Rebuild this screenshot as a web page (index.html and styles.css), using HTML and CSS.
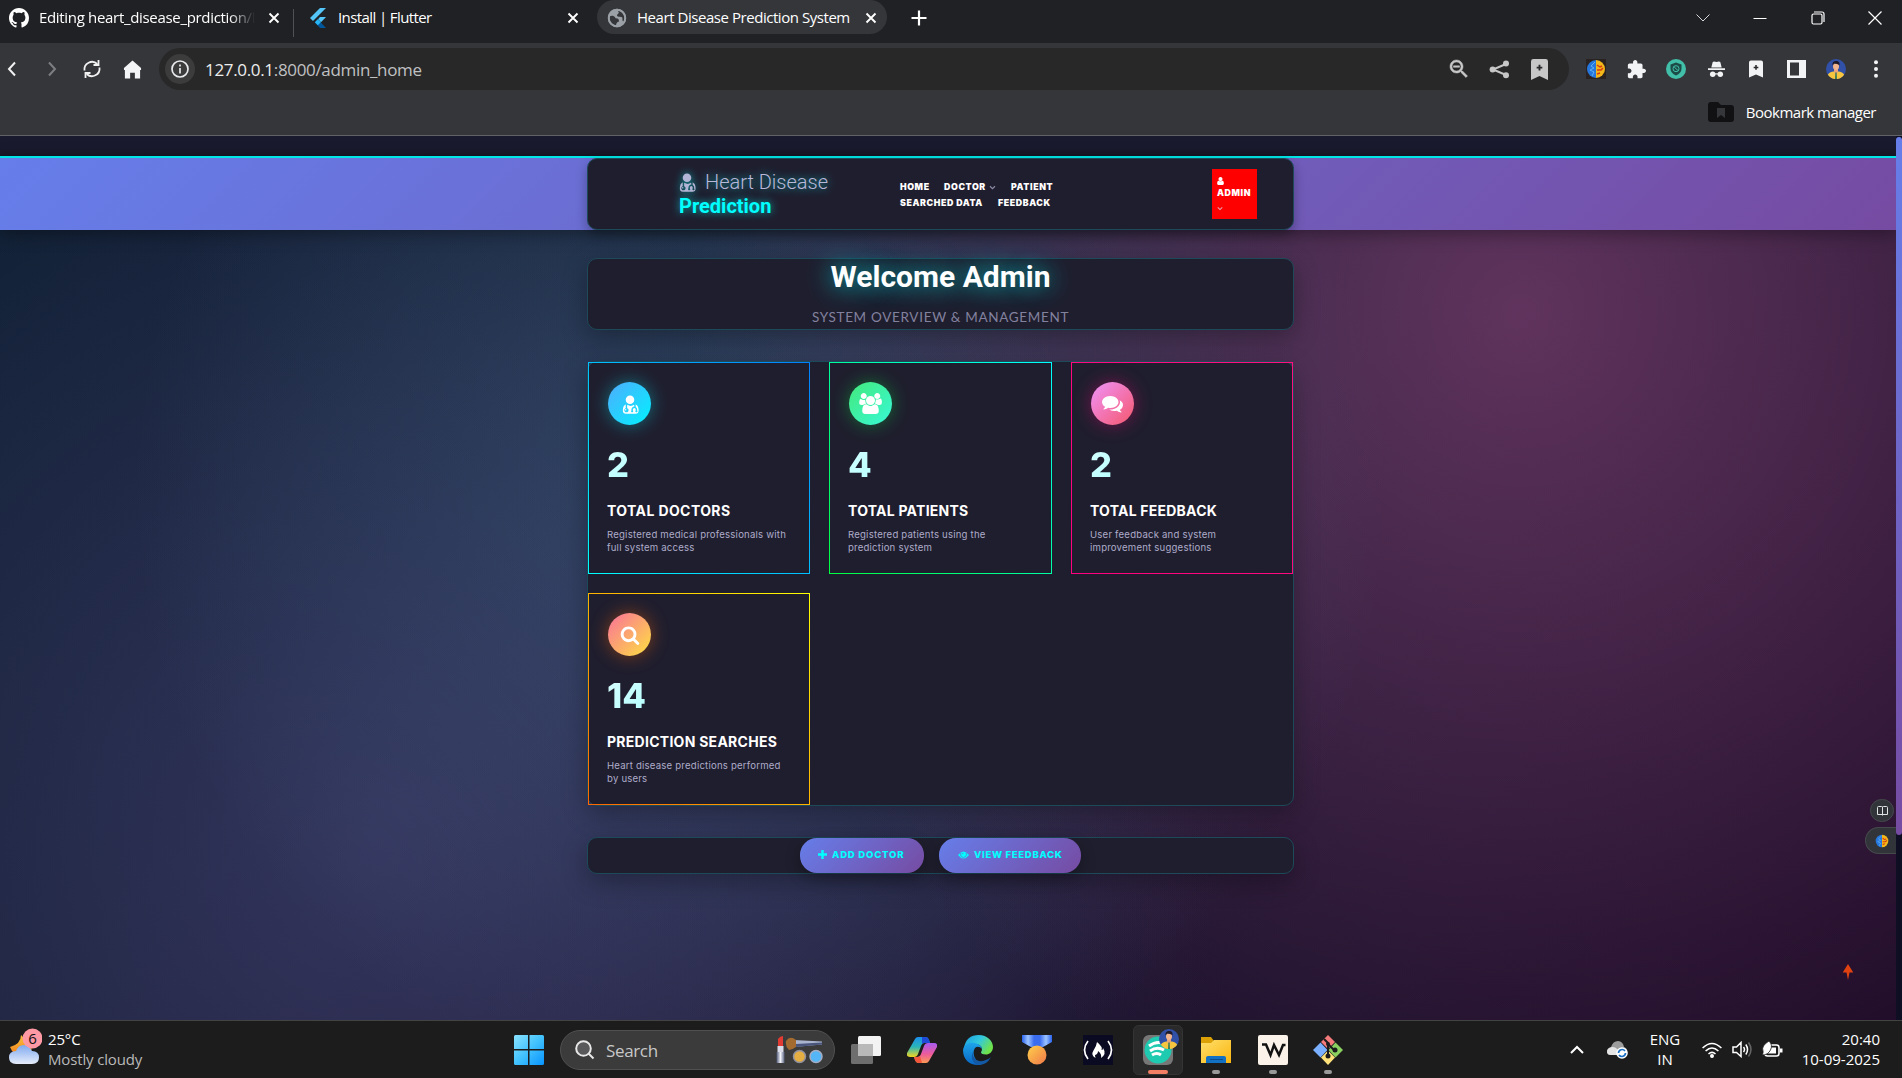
FILE: index.html
```html
<!DOCTYPE html>
<html lang="en">
<head>
<meta charset="utf-8">
<title>Heart Disease Prediction System</title>
<link rel="stylesheet" href="styles.css">
</head>
<body>
<svg width="0" height="0" class="defs">
  <defs>
    <symbol id="user-md" viewBox="0 0 1792 1792"><path d="M576 1408q0 26-19 45t-45 19-45-19-19-45 19-45 45-19 45 19 19 45zm1088 101q0 121-73 190t-194 69h-874q-121 0-194-69t-73-190q0-68 5.500-131t24-138 47.500-132.500 81-103 120-60.500q-22 52-22 120v203q-58 20-93 70t-35 111q0 80 56 136t136 56 136-56 56-136q0-61-35.500-111t-92.500-70v-203q0-62 25-93 132 104 295 104t295-104q25 31 25 93v64q-106 0-181 75t-75 181v89q-32 29-32 71 0 40 28 68t68 28 68-28 28-68q0-42-32-71v-89q0-52 38-90t90-38 90 38 38 90v89q-32 29-32 71 0 40 28 68t68 28 68-28 28-68q0-42-32-71v-89q0-68-34.500-127.500t-93.500-93.500q0-10 .5-42.500t0-48-2.500-41.500-7-47-13-40q68 15 120 60.500t81 103 47.500 132.500 24 138 5.500 131zm-384-997q0 159-112.500 271.500t-271.500 112.500-271.500-112.500-112.500-271.500 112.500-271.500 271.500-112.500 271.500 112.500 112.500 271.500z"/></symbol>
    <symbol id="close" viewBox="0 0 12 12"><path d="M1.500 1.500l9 9M10.500 1.500l-9 9" stroke="currentColor" stroke-width="1.900" fill="none"/></symbol>
    <symbol id="caret" viewBox="0 0 8 6"><path d="M1 1.500l3 3 3-3" stroke="currentColor" stroke-width="1.400" fill="none"/></symbol>
    <symbol id="brain" viewBox="0 0 20 20"><path d="M10 1a9 9 0 0 0 0 18z" fill="#2677dc"/><path d="M10 1a9 9 0 0 1 0 18z" fill="#f4b719"/><path d="M9 3L5 7l3 2-4 2 4 2-2 4" stroke="#5fb0f5" fill="none" stroke-width="1"/><path d="M11 6l3 2 2-1M11 11l4 0 2-2M11 15l3-1" stroke="#d63c12" fill="none" stroke-width="1.500"/></symbol>
    <symbol id="avatar" viewBox="0 0 20 20"><circle cx="10" cy="10" r="10" fill="#3150a8"/><path d="M1.800 15.800c2-3 4-3.300 8.200-3.300s6.200.3 8.200 3.300A10 10 0 0 1 1.800 15.800z" fill="#f6c63f"/><path d="M8 9h4v4l-2 3-2-3z" fill="#eaa277"/><ellipse cx="10" cy="7.300" rx="3" ry="3.800" fill="#f3b58d"/><path d="M6.600 6.600C6 3 8 2 10 2c3 0 4 2 3.400 4.600-1-2-4-1.600-5.400-1.800z" fill="#1d1a2b"/><path d="M9.300 13.500h1.400L11 20H9z" fill="#3f7c55"/></symbol>
    <symbol id="bookmark" viewBox="0 0 18 22"><path d="M2.500 0h13A2.500 2.500 0 0 1 18 2.500V22l-9-4-9 4V2.500A2.500 2.500 0 0 1 2.500 0z"/><path d="M9 6v6M6 9h6" stroke="#2b2b2d" stroke-width="2"/></symbol>
    <linearGradient id="gWin" x1="0" y1="0" x2="1" y2="1"><stop offset="0" stop-color="#8be3ff"/><stop offset=".5" stop-color="#42c2fd"/><stop offset="1" stop-color="#0894ff"/></linearGradient>
    <linearGradient id="gEdge" x1="0" y1="0" x2="1" y2=".5"><stop offset="0" stop-color="#1b9de2"/><stop offset=".55" stop-color="#33c8dc"/><stop offset="1" stop-color="#6fe34b"/></linearGradient>
    <linearGradient id="gEdge2" x1="0" y1="0" x2="0" y2="1"><stop offset="0" stop-color="#1ea4ea"/><stop offset="1" stop-color="#0866c4"/></linearGradient>
    <linearGradient id="gCopA" x1="0" y1="0" x2="0" y2="1"><stop offset="0" stop-color="#1b8fec"/><stop offset=".5" stop-color="#2bb6b8"/><stop offset="1" stop-color="#f2d51f"/></linearGradient>
    <linearGradient id="gCopB" x1="0" y1="0" x2="0" y2="1"><stop offset="0" stop-color="#a55bf1"/><stop offset=".55" stop-color="#ee5b9a"/><stop offset="1" stop-color="#fb9a55"/></linearGradient>
    <linearGradient id="gMedal" x1="0" y1="0" x2="1" y2="1"><stop offset="0" stop-color="#ffd04a"/><stop offset="1" stop-color="#f0794a"/></linearGradient>
    <linearGradient id="gRib" x1="0" y1="0" x2="1" y2="0"><stop offset="0" stop-color="#2a62ee"/><stop offset=".2" stop-color="#9cc4ff"/><stop offset=".4" stop-color="#3a6cf0"/><stop offset=".6" stop-color="#3a6cf0"/><stop offset=".8" stop-color="#9cc4ff"/><stop offset="1" stop-color="#2a62ee"/></linearGradient>
    <linearGradient id="gFold" x1="0" y1="0" x2="1" y2="1"><stop offset="0" stop-color="#ffdf6b"/><stop offset="1" stop-color="#fab60f"/></linearGradient>
    <linearGradient id="gCloud" x1="0" y1="0" x2="0" y2="1"><stop offset="0" stop-color="#7fa9ef"/><stop offset="1" stop-color="#e6edfb"/></linearGradient>
    <linearGradient id="gMoon" x1="0" y1="0" x2="0" y2="1"><stop offset="0" stop-color="#f8c33c"/><stop offset="1" stop-color="#f07b1a"/></linearGradient>
    <linearGradient id="gMetal" x1="0" y1="0" x2="1" y2="0"><stop offset="0" stop-color="#4e5875"/><stop offset=".5" stop-color="#f2f4fa"/><stop offset="1" stop-color="#58627e"/></linearGradient>
  </defs>
</svg>

<header class="browser">
  <div class="tabs">
    <div class="tab tab-first">
      <svg class="fav" width="20" height="20" viewBox="0 0 16 16" fill="#fff"><path d="M8 0C3.580 0 0 3.580 0 8c0 3.540 2.290 6.530 5.470 7.590.4.070.55-.17.55-.38 0-.19-.01-.82-.01-1.490-2.010.37-2.530-.49-2.690-.94-.09-.23-.48-.94-.82-1.130-.28-.15-.68-.52-.01-.53.63-.01 1.080.58 1.230.82.720 1.210 1.870.87 2.330.66.070-.52.28-.87.51-1.070-1.780-.2-3.640-.89-3.640-3.950 0-.87.31-1.590.82-2.150-.08-.2-.36-1.020.08-2.120 0 0 .67-.21 2.200.82.64-.18 1.320-.27 2-.27s1.360.09 2 .27c1.530-1.040 2.200-.82 2.200-.82.44 1.100.16 1.920.08 2.120.51.56.82 1.270.82 2.150 0 3.070-1.870 3.750-3.650 3.950.29.25.54.73.54 1.480 0 1.070-.01 1.930-.01 2.200 0 .21.15.46.55.38A8.010 8.010 0 0 0 16 8c0-4.420-3.580-8-8-8z"/></svg>
      <span class="tab-title fade t-edit">Editing heart_disease_prdiction/l</span>
      <svg class="x" width="12" height="12"><use href="#close"/></svg>
    </div>
    <div class="tab tab-second">
      <svg class="fav" width="16" height="20" viewBox="0 0 16 20"><path d="M10 0h6L3 13l-3-3z" fill="#54c5f8"/><path d="M10 9h6l-5 5.200-3-3z" fill="#54c5f8"/><path d="M4.800 14.200l3-3 8.200 8.800h-6z" fill="#01579b"/><path d="M4.800 14.200l3-3 3 3-3 3z" fill="#29b6f6"/></svg>
      <span class="tab-title t-flutter">Install | Flutter</span>
      <svg class="x" width="12" height="12"><use href="#close"/></svg>
    </div>
    <div class="tab tab-active">
      <svg class="fav" width="22" height="22" viewBox="0 0 24 24" fill="#9aa0a6"><path d="M12 2C6.480 2 2 6.480 2 12s4.480 10 10 10 10-4.480 10-10S17.520 2 12 2zm-1 17.930c-3.950-.49-7-3.850-7-7.930 0-.62.080-1.210.21-1.790C6 9 9 9.500 10 11.500c.5 1.500 3 .5 4 2.500v2c-2 0-3 2-3 3.930zM20 12c0 1.500-.5 3-1.200 4.200C17 14 19 12 17 11c-2-.5-5 0-5-2 0-1.500 2-1.500 2-3l-1-1.900C17 4.500 20 8 20 12z" fill-rule="evenodd"/><circle cx="12" cy="12" r="9" fill="none" stroke="#9aa0a6" stroke-width="2"/></svg>
      <span class="tab-title t-heart">Heart Disease Prediction System</span>
      <svg class="x" width="12" height="12"><use href="#close"/></svg>
    </div>
    <svg class="plus" width="16" height="16" viewBox="0 0 16 16" stroke="#fff" stroke-width="2.200"><path d="M8 .5v15M.5 8h15"/></svg>
    <div class="win-ctl">
      <svg width="14" height="8" viewBox="0 0 14 8" fill="none" stroke="#d5d6d8"><path d="M.5.5L7 7 13.500.5"/></svg>
      <svg width="14" height="14" viewBox="0 0 14 14" stroke="#fff"><path d="M.5 7.500h13"/></svg>
      <svg width="14" height="14" viewBox="0 0 14 14" fill="none" stroke="#fff" stroke-width="1.200"><rect x="1" y="3" width="10" height="10" rx="1.500"/><path d="M3 1h8q2 0 2 2v8"/></svg>
      <svg width="14" height="14" viewBox="0 0 14 14" stroke="#fff" stroke-width="1.200"><path d="M.5.500l13 13M13.500.500l-13 13"/></svg>
    </div>
  </div>

  <div class="toolbar">
    <div class="cells nav-cells">
      <span><svg width="10" height="16" viewBox="0 0 10 16" fill="none" stroke="#f1f1f1" stroke-width="2"><path d="M8 1.500L2 8l6 6.500"/></svg></span>
      <span><svg width="10" height="16" viewBox="0 0 10 16" fill="none" stroke="#7d7e82" stroke-width="2"><path d="M2 1.500L8 8l-6 6.500"/></svg></span>
      <span><svg width="20" height="20" viewBox="0 0 20 20" fill="none" stroke="#f1f1f1" stroke-width="1.800"><path d="M2.500 11.500A7.600 7.600 0 0 1 15.300 5M17.500 8.500A7.600 7.600 0 0 1 4.700 15"/><path d="M16.500 1v5h-5M3.500 19v-5h5"/></svg></span>
      <span><svg width="19" height="19" viewBox="2 2 20 19" fill="#f4f5f7"><path d="M12 2l9 8v2h-1v9h-5.500v-6h-5v6H4v-9H3v-2z"/></svg></span>
    </div>
    <div class="omnibox">
      <span class="info"><svg width="18" height="18" viewBox="0 0 18 18" fill="none" stroke="#e8eaed" stroke-width="1.700"><circle cx="9" cy="9" r="8"/><path d="M9 8v5.500M9 4.500v2"/></svg></span>
      <span class="url"><b>127.0.0.1</b>:8000/admin_home</span>
      <div class="cells omni-cells">
        <span><svg width="24" height="24" viewBox="0 0 24 24" fill="#c7c7c7"><path stroke="#c7c7c7" stroke-width=".5" d="M15.500 14h-.79l-.28-.27C15.410 12.590 16 11.110 16 9.500 16 5.910 13.090 3 9.500 3S3 5.910 3 9.500 5.910 16 9.500 16c1.610 0 3.090-.59 4.230-1.570l.27.28v.79l5 4.990L20.490 19l-4.990-5zm-6 0C7.010 14 5 11.990 5 9.500S7.010 5 9.500 5 14 7.010 14 9.500 11.990 14 9.500 14zM6.500 8.800h6v1.500h-6z"/></svg></span>
        <span><svg width="21" height="19" viewBox="0 0 21 19" fill="#c7c7c7"><path d="M17 4L4 9.500 17 15" fill="none" stroke="#c7c7c7" stroke-width="2"/><circle cx="17" cy="3.500" r="3"/><circle cx="3.600" cy="9.500" r="3"/><circle cx="17" cy="15.300" r="3"/></svg></span>
        <span><svg width="17" height="21" fill="#c7c7c7"><use href="#bookmark"/></svg></span>
      </div>
    </div>
    <div class="cells ext-cells">
      <span><svg width="20" height="20" viewBox="0 0 20 20"><rect width="20" height="20" fill="#2a2221"/><use href="#brain"/></svg></span>
      <span><svg width="19" height="19" viewBox="1 1 22 22" fill="#f1f3f4"><path d="M20.500 11H19V7c0-1.100-.9-2-2-2h-4V3.500C13 2.120 11.880 1 10.500 1S8 2.120 8 3.500V5H4c-1.100 0-1.990.9-1.990 2v3.800H3.500c1.490 0 2.700 1.210 2.700 2.700s-1.210 2.700-2.700 2.700H2V20c0 1.100.9 2 2 2h3.800v-1.500c0-1.490 1.210-2.700 2.700-2.700s2.700 1.210 2.700 2.700V22H17c1.100 0 2-.9 2-2v-4h1.500c1.380 0 2.500-1.120 2.500-2.500S21.880 11 20.500 11z"/></svg></span>
      <span><svg width="20" height="20" viewBox="0 0 20 20"><circle cx="10" cy="10" r="10" fill="#41bfa9"/><path d="M10 3.500l5.500 2v4q0 4.500-5.500 7-5.500-2.500-5.500-7v-4z" fill="#1d4c48"/><circle cx="10" cy="9.700" r="3" fill="none" stroke="#41bfa9" stroke-width="1"/><path d="M8 7.700l4 4" stroke="#41bfa9" stroke-width="1"/></svg></span>
      <span><svg width="17" height="17" viewBox="0 0 18 18" fill="#f1f3f4"><path d="M5 1q1-1 4 0 3-1 4 0l1.500 6h-11zM0 7.800h18v1.800H0z"/><circle cx="5" cy="14" r="2.900"/><circle cx="13" cy="14" r="2.900"/><path d="M6 13h6v1.300H6z"/></svg></span>
      <span><svg width="14" height="18" fill="#f1f3f4"><use href="#bookmark"/></svg></span>
      <span><svg width="19" height="18" viewBox="0 0 19 18"><rect width="19" height="18" fill="#f1f3f4"/><rect x="3" y="2.500" width="9" height="13" fill="#35363a"/></svg></span>
      <span><svg width="20" height="20"><use href="#avatar"/></svg></span>
      <span><svg width="6" height="18" viewBox="0 0 6 18" fill="#f1f3f4"><circle cx="3" cy="2.200" r="2"/><circle cx="3" cy="9" r="2"/><circle cx="3" cy="15.800" r="2"/></svg></span>
    </div>
  </div>

  <div class="bookmarks">
    <svg width="26" height="20" viewBox="0 0 26 20"><path d="M3 0h7l3 3h10q3 0 3 3v11q0 3-3 3H3q-3 0-3-3V3q0-3 3-3z" fill="#111113"/><path d="M9 6h8v10l-4-3-4 3z" fill="#35363a"/></svg>
    <span class="t-bm">Bookmark manager</span>
  </div>
</header>

<main class="page">
  <div class="top-strip"></div>
  <div class="site-header">
    <nav class="panel navbar">
      <div class="brand">
        <div class="brand-row"><svg width="18" height="20" viewBox="128 0 1536 1792"><use href="#user-md" width="1792" height="1792"/></svg><span class="light">Heart Disease</span></div>
        <strong>Prediction</strong>
      </div>
      <div class="menu">
        <div class="menu-row"><a class="m1">HOME</a><a class="m2">DOCTOR<svg width="7" height="5"><use href="#caret"/></svg></a><a class="m3">PATIENT</a></div>
        <div class="menu-row"><a class="m4">SEARCHED DATA</a><a class="m5">FEEDBACK</a></div>
      </div>
      <div class="admin">
        <svg width="7" height="8" viewBox="256 128 1280 1536" fill="#fff"><path d="M1536 1399q0 109-62.500 187t-150.500 78h-854q-88 0-150.500-78t-62.500-187q0-85 8.500-160.500t31.500-152 58.500-131 94-89 134.500-34.500q131 128 313 128t313-128q76 0 134.500 34.500t94 89 58.500 131 31.500 152 8.500 160.500zm-256-887q0 159-112.500 271.500t-271.500 112.500-271.500-112.500-112.500-271.500 112.500-271.500 271.500-112.500 271.500 112.500 112.500 271.500z"/></svg>
        <span>ADMIN</span>
        <svg class="car" width="6" height="5"><use href="#caret"/></svg>
      </div>
    </nav>
  </div>

  <section class="panel welcome">
    <h1>Welcome Admin</h1>
    <p>SYSTEM OVERVIEW &amp; MANAGEMENT</p>
  </section>

  <section class="panel stats">
    <article class="card doctors">
      <div class="ico"><svg width="20" height="20" fill="#fff"><use href="#user-md"/></svg></div>
      <div class="num">2</div>
      <h2 class="c1">TOTAL DOCTORS</h2>
      <p>Registered medical professionals with<br>full system access</p>
    </article>
    <article class="card patients">
      <div class="ico"><svg width="23" height="21" viewBox="0 0 1920 1792" fill="#fff"><path d="M593 896q-162 5-265 128h-134q-82 0-138-40.500t-56-118.500q0-353 124-353 6 0 43.500 21t97.500 42.500 119 21.500q67 0 133-23-5 37-5 66 0 159 90 292zm1071 637q0 120-73 189.500t-194 69.500h-874q-121 0-194-69.500t-73-189.500q0-53 3.500-103.500t14-109 26.500-108.500 43-97.500 62-81 85.500-53.500 111.500-20q10 0 43 21.500t73 48 107 48 135 21.500 135-21.500 107-48 73-48 43-21.500q61 0 111.500 20t85.500 53.500 62 81 43 97.500 26.500 108.500 14 109 3.500 103.500zm-1024-1277q0 106-75 181t-181 75-181-75-75-181 75-181 181-75 181 75 75 181zm704 384q0 159-112.500 271.500t-271.500 112.500-271.500-112.500-112.500-271.500 112.500-271.500 271.500-112.500 271.500 112.500 112.500 271.500zm576 225q0 78-56 118.500t-138 40.500h-134q-103-123-265-128 90-133 90-292 0-29-5-66 66 23 133 23 59 0 119-21.500t97.500-42.500 43.500-21q124 0 124 353zm-128-609q0 106-75 181t-181 75-181-75-75-181 75-181 181-75 181 75 75 181z"/></svg></div>
      <div class="num">4</div>
      <h2 class="c2">TOTAL PATIENTS</h2>
      <p>Registered patients using the<br>prediction system</p>
    </article>
    <article class="card feedback">
      <div class="ico"><svg width="21" height="21" viewBox="0 0 1792 1792" fill="#fff"><path d="M1408 768q0 139-94 257t-256.500 186.500-353.500 68.500q-86 0-176-16-124 88-278 128-36 9-86 16h-3q-11 0-20.500-8t-11.500-21q-1-3-1-6.500t.5-6.500 2-6l2.500-5 3.500-5.500 4-5 4.500-5 4-4.500q5-6 23-25t26-29.500 22.500-29 25-38.500 20.500-44q-124-72-195-177t-71-224q0-139 94-257t256.500-186.500 353.500-68.500 353.500 68.500 256.500 186.500 94 257zm384 256q0 120-71 224.500t-195 176.500q10 24 20.500 44t25 38.500 22.500 29 26 29.500 23 25q1 1 4 4.500t4.500 5 4 5 3.500 5.500l2.500 5 2 6 .5 6.500-1 6.500q-3 14-13 22t-22 7q-50-7-86-16-154-40-278-128-90 16-176 16-271 0-472-132 58 4 88 4 161 0 309-45t264-129q125-92 192-212t67-254q0-77-23-152 129 71 204 178t75 230z"/></svg></div>
      <div class="num">2</div>
      <h2 class="c3">TOTAL FEEDBACK</h2>
      <p>User feedback and system<br>improvement suggestions</p>
    </article>
    <article class="card searches">
      <div class="ico"><svg width="20" height="20" viewBox="0 0 1792 1792" fill="#fff"><path d="M1216 832q0-185-131.500-316.500t-316.500-131.500-316.500 131.500-131.500 316.500 131.500 316.500 316.500 131.500 316.500-131.500 131.500-316.500zm512 832q0 52-38 90t-90 38q-54 0-90-38l-343-342q-179 124-399 124-143 0-273.500-55.500t-225-150-150-225-55.500-273.500 55.500-273.500 150-225 225-150 273.500-55.500 273.500 55.500 225 150 150 225 55.500 273.500q0 220-124 399l343 343q37 37 37 90z"/></svg></div>
      <div class="num">14</div>
      <h2 class="c4">PREDICTION SEARCHES</h2>
      <p>Heart disease predictions performed<br>by users</p>
    </article>
  </section>

  <section class="panel actions">
    <a class="btn b1"><svg width="9" height="9" viewBox="0 0 9 9"><path d="M3.300 0h2.400v3.300H9v2.400H5.700V9H3.300V5.700H0V3.300h3.300z" fill="#0ff"/></svg><span>ADD DOCTOR</span></a>
    <a class="btn b2"><svg width="11" height="8" viewBox="0 0 22 16"><path d="M0 8Q11-6 22 8 11 22 0 8z" fill="#0ff"/><path d="M6 3.500a6 6 0 1 0 10 0" fill="none" stroke="#6a6fd0" stroke-width="1.500"/><path d="M8 7a3 3 0 0 1 3-3" fill="none" stroke="#6a6fd0" stroke-width="1.200"/></svg><span>VIEW FEEDBACK</span></a>
  </section>

  <svg class="to-top" width="12" height="16" viewBox="0 0 12 16" fill="#df4210"><path d="M6 0l5.300 8.500H7.500L6 16 4.500 8.500H.7z"/></svg>
  <div class="reader"><svg width="11" height="10" viewBox="0 0 11 10" fill="none" stroke="#e2e4e4"><path d="M5.500 1v8.500M.5 1.500q0-1 1-1h3q1 0 1 1 0-1 1-1h3q1 0 1 1v7h-10z"/></svg></div>
  <div class="side-pill"><svg width="14" height="14"><use href="#brain"/></svg></div>
  <div class="scroll"><i></i></div>
</main>

<footer class="taskbar">
  <svg class="weather" width="34" height="38" viewBox="0 0 34 38"><path d="M13 7q0 9-11 12 3 9 14 9 8-2 8-10z" fill="url(#gMoon)"/><path d="M8 36q-7 0-7-6.500T8 23q2-6 8-6 5 0 8 6 7 0 7 6.500T24 36z" fill="url(#gCloud)"/><circle cx="24.500" cy="10.500" r="10" fill="#ff99a4"/><text x="20.200" y="16" font-size="15" fill="#111">6</text></svg>
  <div class="wx"><span class="w1">25°C</span><span class="w2">Mostly cloudy</span></div>
  <svg class="win" width="30" height="30" viewBox="0 0 30 30" fill="url(#gWin)"><path d="M1.500 0H14v14H0V1.500Q0 0 1.500 0zM15.500 0h13Q30 0 30 1.500V14H15.500zM0 15.500h14V30H1.500Q0 30 0 28.500zM15.500 15.500H30v13q0 1.500-1.500 1.500h-13z"/></svg>
  <div class="search">
    <svg width="20" height="20" viewBox="0 0 20 20" fill="#59595b" stroke="#e8e8e8" stroke-width="2"><circle cx="8.500" cy="8.500" r="7.300"/><path d="M13.500 13.500l5 5"/></svg>
    <span>Search</span>
    <svg class="makeup" width="47" height="28" viewBox="0 0 47 28"><path d="M2 3q2-3 5-3v11H2z" fill="#e23b34"/><path d="M1.500 10h6v6h-6z" fill="#d9dce8"/><path d="M.500 16h8v11h-8z" fill="url(#gMetal)"/><path d="M18 4l28 1.500v3L18 11z" fill="#aab4cf"/><path d="M20 8l26-1.500v2L20 11z" fill="#49557a"/><path d="M10 5q4-6 10-1v7q-4 3-7 3-4-4-3-9z" fill="#a46b31"/><circle cx="23.500" cy="20.500" r="6" fill="#e5ae43" stroke="#8e90a0" stroke-width="1.500"/><circle cx="40" cy="20.500" r="6" fill="#54b6f6" stroke="#a3acc2" stroke-width="1.500"/></svg>
  </div>
  <div class="apps">
    <span class="a1"><svg width="30" height="28" viewBox="0 0 30 28"><rect x="7" width="23" height="20" rx="1.500" fill="#f3f3f3"/><rect y="8" width="22" height="20" rx="1.500" fill="#6e6e6e"/><path d="M7 8h15v12H7z" fill="#b9b9b9"/></svg></span>
    <span class="a2"><svg width="30" height="26" viewBox="0 0 30 26"><path d="M8 2q1-2 3-2h8q2 0 3 3l1 3h-6q-2 0-3 3l-3 8q-1 3-4 3H3q-4 0-3-4z" fill="url(#gCopA)"/><path d="M15 0h4q2 0 3 3l1 3h-6q-1 0-2 1z" fill="#1f4bd6"/><path d="M22 24q-1 2-3 2h-8q-2 0-3-3l-1-3h3q3 0 4-3l3-8q1-3 4-3h6q4 0 3 4z" fill="url(#gCopB)"/><path d="M15 26h-4q-2 0-3-3l-1-3h3q2 0 3-1z" fill="#f4573b"/></svg></span>
    <span class="a3"><svg width="30" height="30" viewBox="0 0 30 30"><path d="M1 13Q3 0 16 0c8 0 14 6 14 12 0 5-4 7.500-7 7.500s-5-1-5-2 1-1.500 1-3.500-2-5-7-5-9 3-11 4z" fill="url(#gEdge)"/><path d="M0 15C1 9 6 7 11 8c5 .5 8 3.500 8 6-2-2.500-5-3-7-1-3 4-1 12 5 15 1 1 0 2-2 2C6 30 0 24 0 15z" fill="url(#gEdge2)"/><path d="M10 17c-1 6 4 10 10 9 4-1 7-3 8-4-3 6-8 8-12 8-6-1-9-7-6-13z" fill="#1459a5"/></svg></span>
    <span class="a4"><svg width="30" height="30" viewBox="0 0 30 30"><path d="M0 0h30v7L21 12H9L0 7z" fill="url(#gRib)"/><circle cx="15" cy="20" r="9.500" fill="url(#gMedal)"/></svg></span>
    <span class="a5"><svg width="30" height="30" viewBox="0 0 30 30"><path fill="#0a0a23" d="M0 0h30v30H0z"/><path d="M5 6q-7 9 0 18M25 6q7 9 0 18" stroke="#fff" stroke-width="1.700" fill="none"/><path d="M14 7q6 5 4.500 8 2 0 1.500-2 4 6-2 10 1-4-3-7 0 3-3 4 0 1 .5 3-5-3-2-7.500T14 7z" fill="#fff"/></svg></span>
    <span class="a6"><svg width="50" height="50" viewBox="0 0 50 50"><rect x=".5" y=".5" width="49" height="49" rx="5" fill="#2a2a2a" stroke="#343434"/><rect x="10" y="10" width="30" height="30" rx="6" fill="#777"/><circle cx="25" cy="25" r="13.500" fill="#1fcbb0"/><path d="M16 21q8-6 16-2M17 26q7-5 14-1M19 30q5-3 9 0" stroke="#fff" stroke-width="3" fill="none"/><use href="#avatar" x="26" y="4" width="20" height="20"/><rect x="15" y="45" width="20" height="4" rx="2" fill="#f27f63"/></svg></span>
    <span class="a7"><svg width="30" height="50" viewBox="0 0 30 50"><path d="M0 12h10l3 4v6H0z" fill="#dba106"/><path d="M0 18h10l3-3h17v23H0z" fill="url(#gFold)"/><path d="M5 38v-5q0-2 2-2h16q2 0 2 2v5z" fill="#1371c4"/><path d="M9 34.500h13" stroke="#0a4c8c"/><rect x="11" y="45" width="8" height="4" rx="2" fill="#999"/></svg></span>
    <span class="a8"><svg width="30" height="50" viewBox="0 0 30 50"><rect y="10" width="30" height="30" rx="2" fill="#fbf3ea"/><path d="M4 19.500h4l4.500 10.500 3.500-10 5 10 4-10h2.500" stroke="#111" stroke-width="2.500" fill="none"/><rect x="11" y="45" width="8" height="4" rx="2" fill="#999"/></svg></span>
    <span class="a9"><svg width="30" height="50" viewBox="0 0 30 50"><path d="M15 10l7 7-7 7-7-7z" fill="#f57a7a"/><path d="M7.500 17.500l7 7.500-7 7.500L0 25z" fill="#7ab0ff"/><path d="M22.500 17.500L30 25l-7.500 7.500-7-7.500z" fill="#8bd15f"/><path d="M15 25.500l7 7-7 7.500-7-7.500z" fill="#ffe27a"/><path d="M11 14l4 4v14M15 19l6 6" stroke="#1c1c1c" stroke-width="2" fill="none"/><circle cx="15" cy="19" r="2" fill="#1c1c1c"/><circle cx="15" cy="31" r="2.500" fill="#1c1c1c"/><circle cx="22" cy="25" r="2.500" fill="#1c1c1c"/><rect x="11" y="45" width="8" height="4" rx="2" fill="#999"/></svg></span>
  </div>
  <div class="tray">
    <svg class="t1" width="14" height="9" viewBox="0 0 14 9" fill="none" stroke="#fff" stroke-width="2"><path d="M1 8l6-6 6 6"/></svg>
    <svg class="t2" width="21" height="18" viewBox="0 0 21 18"><path d="M4 14Q0 14 0 10.500T4 6q2-6 7-6 5 .5 6 6 3 1 3 4t-3 4z" fill="#9c9c9c"/><path d="M4 14Q0 14 0 10.500T5 6q5-1 9 8z" fill="#e5e5e5"/><circle cx="15" cy="12" r="5.800" fill="#fff"/><path d="M11.500 12a3.600 3.600 0 0 1 6.500-2M18.500 12a3.600 3.600 0 0 1-6.500 2" stroke="#1a6fc4" stroke-width="1.700" fill="none"/></svg>
    <div class="lang"><span>ENG</span><span>IN</span></div>
    <svg class="t3" width="20" height="16" viewBox="0 0 20 16" fill="none" stroke="#fff" stroke-width="1.600"><path d="M.6 6q9.400-9 18.800 0M3.600 9q6.400-6 12.800 0M6.500 12q3.500-3.200 7 0"/><circle cx="10" cy="14" r="1.200" fill="#fff"/></svg>
    <svg class="t4" width="21" height="17" viewBox="0 0 21 17" fill="none" stroke="#fff" stroke-width="1.500"><path d="M1 6h3.500L9 1.500v14L4.500 11.500H1zM11.500 6q2 2.500 0 5M13.800 3.500q3.500 5 0 10"/><path d="M16.500 1.500q5 7 0 14" stroke="#666"/></svg>
    <svg class="t5" width="21" height="17" viewBox="0 0 21 17"><rect x="3" y="4" width="14" height="11" rx="2.500" fill="none" stroke="#fff" stroke-width="1.600"/><path d="M18 7.500h2.500v4H18z" fill="#fff"/><path d="M8 6.500h6v6H5z" fill="#fff"/><path d="M7 0q4 4 1.500 9T0 14q1.500-2 1-4-2-5 6-10z" fill="#fff" stroke="#1c1c1c" stroke-width=".8"/></svg>
    <div class="clock"><span>20:40</span><span>10-09-2025</span></div>
  </div>
</footer>
</body>
</html>
```
FILE: styles.css
```css
* { box-sizing: border-box; }
html, body { height: 100%; }
body {
  margin: 0;
  width: 1902px;
  height: 1078px;
  overflow: hidden;
  display: flex;
  flex-direction: column;
  background: #1a1a2e;
  font-family: "Open Sans", "Noto Sans", sans-serif;
  color: #fff;
}
svg { display: block; flex: none; }
.defs { position: absolute; }
h1, h2, p { margin: 0; }

/* browser chrome */
.browser { height: 136px; background: #35363a; border-bottom: 1px solid #616266; flex: none; }
.tabs { height: 43px; background: #202124; display: flex; align-items: flex-start; font-size: 15px; }
.tab { height: 36px; display: flex; align-items: center; white-space: nowrap; }
.tab-title { line-height: 20px; padding-bottom: 2px; }
.tab .x { margin-left: auto; }
.tab-first { width: 280px; margin-left: 9px; }
.tab-first .tab-title { margin-left: 10px; width: 216px; }
.fade { -webkit-mask-image: linear-gradient(90deg, #000 88%, transparent 100%); mask-image: linear-gradient(90deg, #000 88%, transparent 100%); }
.tab-first .x { margin-right: 9px; }
.tab-second { width: 284px; margin-left: 4px; }
.tab-second::before { content: ""; width: 1px; height: 28px; background: #505154; margin: 10px 16px 0 0; }
.tab-second .tab-title { margin-left: 12px; }
.tab-second .x { margin-right: -2px; }
.tab-active { width: 290px; margin-left: 20px; height: 34px; padding: 2px 10px 0 9px; border-radius: 17px; background: #35363a; }
.tab-active .tab-title { margin-left: 9px; }
.plus { margin: 10px 0 0 24px; }
.t-edit { letter-spacing: -.32px; }
.t-flutter { letter-spacing: -.6px; }
.t-heart { letter-spacing: -.45px; }
.win-ctl { margin-left: auto; display: flex; align-items: center; gap: 43.500px; height: 36px; padding-right: 20px; }

.toolbar { height: 52px; display: flex; align-items: center; }
.cells { display: flex; }
.cells span { width: 40px; display: flex; justify-content: center; align-items: center; }
.nav-cells { margin-left: -8px; }
.omnibox { width: 1410px; height: 42px; margin-left: 7px; border-radius: 21px; background: #282828; display: flex; align-items: center; padding: 0 10px 0 6px; }
.info { width: 30px; height: 30px; border-radius: 50%; background: #3c3c3c; display: flex; align-items: center; justify-content: center; }
.url { margin-left: 10px; font-size: 17px; color: #c0c1c3; letter-spacing: -.33px; }
.url b { font-weight: 400; color: #eceded; }
.omni-cells { margin-left: auto; }
.ext-cells { margin-left: 7px; }
.bookmarks { height: 40px; padding: 0 26px 2px 0; display: flex; justify-content: flex-end; align-items: center; font-size: 15px; gap: 12px; margin-top: -2px; }
.t-bm { letter-spacing: -.5px; }

/* page */
.page {
  position: relative;
  height: 884px;
  flex: none;
  background:
    radial-gradient(circle at 20% 80%, rgba(120, 119, 198, .3) 0%, transparent 50%),
    radial-gradient(circle at 80% 20%, rgba(255, 119, 198, .3) 0%, transparent 50%),
    radial-gradient(circle at 40% 40%, rgba(120, 219, 255, .2) 0%, transparent 50%),
    linear-gradient(135deg, #0d1e31 0%, #131a2f 30%, #1a1730 55%, #1e0c28 100%);
}
.top-strip { height: 20px; background: linear-gradient(#1a1a2e 60%, #171728); }
.site-header {
  width: 1896px;
  height: 74px;
  border-top: 2px solid #00e5e5;
  background: linear-gradient(135deg, #667eea 0%, #764ba2 100%);
  box-shadow: 0 4px 16px rgba(0, 0, 0, .35);
}
.panel {
  width: 707px;
  margin-left: 587px;
  background: #1f1e2e;
  border: 1px solid #1c4a59;
  border-radius: 10px;
  box-shadow: 0 8px 26px rgba(0, 0, 0, .3);
}
.navbar { height: 72px; display: flex; align-items: flex-start; padding: 10px 36px 0 91px; box-shadow: 0 5px 12px rgba(0, 0, 0, .3); }
.brand { width: 221px; font-family: Roboto, sans-serif; font-size: 20px; line-height: 24px; color: #b8b8d9; padding-top: 1px; margin-left: -1px; margin-right: 1px; }
.brand-row { display: flex; align-items: center; }
.brand svg { fill: #b3b5d6; filter: drop-shadow(0 0 4px rgba(0, 255, 255, .6)); }
.light { font-weight: 300; margin-left: 9px; text-shadow: 0 0 8px rgba(0, 255, 255, .7); }
.brand strong { display: block; font-weight: 700; color: #0ff; text-shadow: 0 0 8px rgba(0, 255, 255, .7); padding-left: 1px; }
.menu { width: 312px; padding-top: 10px; font: 900 8.800px/16px Inter, sans-serif; }
.menu-row { display: flex; }
.menu-row a { display: flex; align-items: center; letter-spacing: .6px; }
.menu-row svg { color: #8b8ba6; margin-left: 3px; }
.m1 { width: 44px; }
.m2 { width: 67px; }
.m4 { width: 98px; }
.admin { width: 45px; height: 50px; background: red; padding: 8px 5px 0; font: 900 8.800px/16px Inter, sans-serif; letter-spacing: .6px; }
.admin span { display: block; }
.admin .car { color: #e5a0ae; margin: 5px 0 0; }

.welcome { height: 72px; margin-top: 28px; text-align: center; }
.welcome h1 { font: 700 30px/36px Roboto, sans-serif; text-shadow: 0 0 20px rgba(0, 255, 255, .5), 0 0 34px rgba(0, 255, 255, .4); }
.welcome p { font: 400 13.500px/18px Lato, sans-serif; color: #83829e; letter-spacing: .68px; margin-top: 13px; }

.stats { height: 445px; margin-top: 31px; display: grid; grid-template-columns: 222px 223px 222px; grid-auto-rows: 212px; gap: 19px; }
.card { border: 1px solid; padding: 19px 18px; }
.doctors { border-image: linear-gradient(45deg, #0ff, #0080ff) 1; --g: linear-gradient(135deg, #4facfe, #00f2fe); --s: rgba(0, 242, 254, .4); }
.patients { border-image: linear-gradient(45deg, #00ff41, #0ff) 1; --g: linear-gradient(135deg, #43e97b, #38f9d7); --s: rgba(0, 255, 65, .35); }
.feedback { border-image: linear-gradient(45deg, #ff0080, #ff1080) 1; --g: linear-gradient(135deg, #f093fb, #f5576c); --s: rgba(255, 0, 128, .4); }
.searches { border-image: linear-gradient(45deg, #ff6600, #ffff00) 1; --g: linear-gradient(135deg, #fa709a, #fee140); --s: rgba(255, 102, 0, .45); }
.ico { width: 43px; height: 43px; margin-left: 1px; border-radius: 50%; background: var(--g); box-shadow: 0 0 18px var(--s); display: flex; align-items: center; justify-content: center; }
.num { font: 800 34.500px/44px Inter, sans-serif; margin-top: 18px; background: linear-gradient(135deg, #d8ffff, #b4ffff); width: max-content; -webkit-background-clip: text; background-clip: text; color: transparent; }
.card h2 { font: 700 14px/20px Inter, sans-serif; margin-top: 14px; white-space: nowrap; }
.card .c1 { letter-spacing: .4px; }
.card .c2 { letter-spacing: .24px; }
.card .c3 { letter-spacing: .22px; }
.card .c4 { letter-spacing: .27px; }
.card p { font: 400 9.600px/13px Inter, sans-serif; color: #aeacca; margin-top: 7px; white-space: nowrap; letter-spacing: .2px; }

.actions { height: 37px; margin-top: 31px; display: flex; justify-content: flex-start; padding-left: 212px; gap: 15px; }
.btn { height: 35px; border-radius: 17px; background: linear-gradient(135deg, #667eea, #764ba2); display: flex; align-items: center; color: #0ff; font: 800 9.600px/12px Inter, sans-serif; box-shadow: 0 5px 15px rgba(0, 0, 0, .3); white-space: nowrap; }
.b1 { width: 124px; padding: 0 0 2px 18px; gap: 5px; letter-spacing: .75px; }
.b2 { width: 142px; padding: 0 0 2px 19px; gap: 5px; letter-spacing: .66px; }

.to-top { position: absolute; left: 1842px; top: 828px; }
.reader { position: absolute; left: 1870px; top: 663px; width: 24px; height: 23px; border-radius: 12px; background: #313539; border: 1px solid #46494c; display: flex; align-items: center; justify-content: center; }
.side-pill { position: absolute; left: 1865px; top: 691px; width: 31px; height: 27px; border-radius: 14px 0 0 14px; background: #313539; border: 1px solid #46494c; border-right: 0; display: flex; align-items: center; padding-left: 9px; }
.scroll { position: absolute; right: 0; top: 0; width: 6px; height: 884px; background: #0f0f23; }
.scroll i { display: block; margin-top: 1px; height: 698px; border-radius: 3px; background: linear-gradient(#667eea, #764ba2); }

/* taskbar */
.taskbar { height: 58px; flex: none; background: #1c1c1c; border-top: 1px solid #434343; display: flex; align-items: center; font-size: 15px; white-space: nowrap; }
.weather { margin: -6px 0 0 8px; }
.wx { margin: -2px 0 0 6px; width: 466px; display: flex; flex-direction: column; line-height: 20px; letter-spacing: -.15px; }
.w2 { color: #b9b9b9; }
.search { width: 275px; height: 40px; margin-left: 16px; border-radius: 20px; background: #3b3b3b; border: 1px solid #505050; display: flex; align-items: center; padding: 0 11px 0 14px; font-size: 17px; letter-spacing: -.35px; color: #c8c8c8; }
.search span { margin-left: 11px; padding-top: 1px; }
.makeup { margin-left: auto; }
.apps { display: flex; align-items: center; margin-left: 16px; }
.a2 { margin-left: 26px; }
.a3 { margin-left: 26px; }
.a4 { margin-left: 29px; }
.a5 { margin-left: 31px; }
.a6 { margin-left: 20px; }
.a7 { margin-left: 18px; }
.a8 { margin-left: 27px; }
.a9 { margin-left: 25px; }
.tray { margin-left: auto; display: flex; align-items: center; padding-right: 22px; line-height: 20px; }
.t2 { margin-left: 23px; }
.lang { width: 40px; margin: -1px 0 0 17px; display: flex; flex-direction: column; align-items: center; }
.t3 { margin-left: 17px; }
.t4 { margin-left: 10px; }
.t5 { margin-left: 9px; }
.clock { width: 97px; margin-top: -2px; display: flex; flex-direction: column; align-items: flex-end; }
```
